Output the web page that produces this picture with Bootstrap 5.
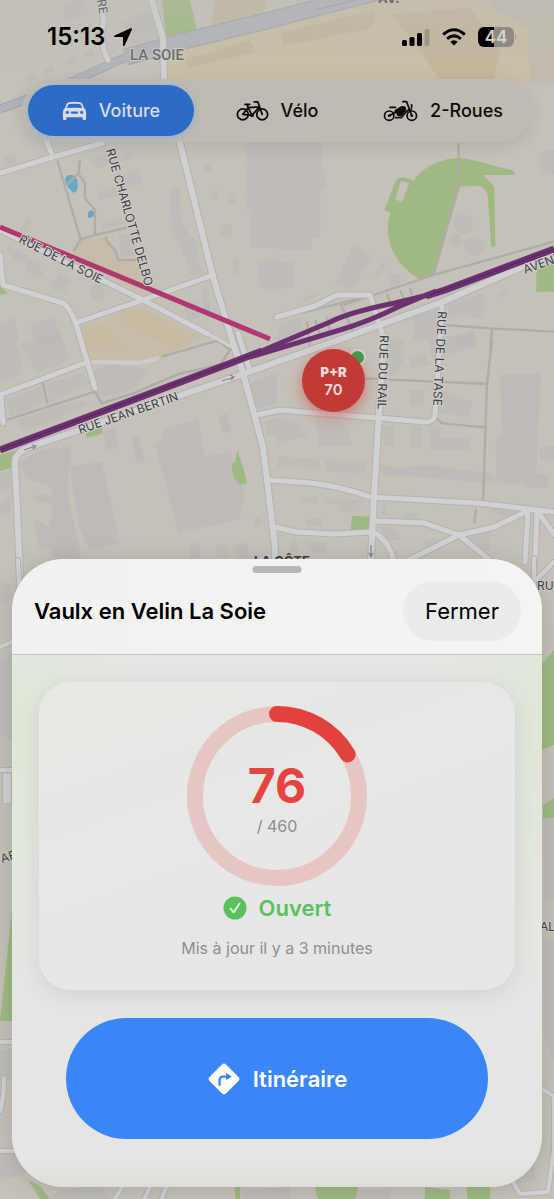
<!DOCTYPE html>
<html lang="fr">
<head>
<meta charset="utf-8">
<meta name="viewport" content="width=device-width, initial-scale=1">
<title>Vaulx en Velin La Soie</title>
<link href="https://cdn.jsdelivr.net/npm/bootstrap@5.3.0/dist/css/bootstrap.min.css" rel="stylesheet">
<style>
  body { font-family: Inter, "Liberation Sans", sans-serif; background: #c6c2ba; color: #000; }
  .map-layer { inset: 0; z-index: 0; }
  .map-layer > svg { width: 100%; height: 100%; display: block; }
  .over-map { z-index: 1; }

  /* map drawing */
  .bld { fill: #b9b7b8; }
  .lot { fill: #c6baa0; }
  .grass { fill: #a0b983; }
  .water { fill: #66a9c4; }
  .casing { fill: none; stroke: #b4b3b1; stroke-linejoin: round; stroke-linecap: round; }
  .street { fill: none; stroke: #d1d1d3; stroke-linejoin: round; stroke-linecap: round; }
  .footway { fill: none; stroke: #b0aca5; stroke-width: 7; stroke-linejoin: round; }
  .map-label { font: 400 12px Inter, "Liberation Sans", sans-serif; fill: #3e3e42; stroke: #d0cfcd; stroke-width: 2px; paint-order: stroke; }
  .map-place { font: 500 15px Roboto, "Liberation Sans", sans-serif; fill: #626266; stroke: #cdcac4; stroke-width: 2px; paint-order: stroke; }
  .map-district { font: 700 13px Inter, "Liberation Sans", sans-serif; fill: #3e3e42; }

  .status-row { height: 74px; padding: 0 37px 0 47px; }
  .clock { font-size: 24px; font-weight: 600; line-height: 28px; }
  .battery-level { width: 36px; height: 20px; border-radius: 6px; font-size: 17px; font-weight: 600; line-height: 20px; color: #d9d5cc;
    background: linear-gradient(90deg, #000 44%, #8f8b83 44%); }

  .mode-bar { margin: 5px 22px 0; padding: 6px; border-radius: 32px; background: rgba(191, 187, 177, .95); box-shadow: 0 4px 16px rgba(60, 60, 60, .12); }
  .mode-bar .btn { height: 51px; border: 0; border-radius: 26px; font-size: 18px; font-weight: 500; line-height: 24px; color: #0b0b0b; padding: 0; }
  .mode-bar .btn-check:checked + .btn { background: #2d6bc9; color: #d9dde2; box-shadow: 0 2px 8px rgba(120, 165, 215, .6); }

  .park-pin { left: 302px; top: 349px; width: 63px; height: 63px; border: 0; border-radius: 50%; background: #c23a37; color: #e9dfdb; z-index: 1;
    box-shadow: 0 5px 14px rgba(208, 60, 60, .55); font-weight: 600; font-size: 15px; line-height: 17px; padding: 0; }
  .park-pin strong { font-size: 13px; font-weight: 900; line-height: 17px; }
  .open-dot { left: 349px; top: 349px; width: 17px; height: 17px; border-radius: 50%; background: #3f9f49; border: 2px solid #cfd3ca; }

  .sheet { margin: 0 12px 12px; border-radius: 52px; background: #e5e6e3; box-shadow: 0 2px 24px rgba(0, 0, 0, .14); overflow: hidden; }
  .sheet-head { height: 96px; padding: 8px 21px 0 22px; background: linear-gradient(90deg, #f1f2ef, #f4f4f4); border-bottom: 1px solid #c2c5c1; }
  .grabber { top: 7px; width: 49px; height: 7px; border-radius: 4px; background: #b7b7b7; }
  .sheet-title { font-size: 22px; font-weight: 600; line-height: 28px; }
  .close-btn { width: 118px; height: 60px; border: 0; border-radius: 30px; background: #ebebeb; font-size: 22px; line-height: 28px; color: #000; }
  .sheet-body { padding: 27px 27px 48px; background:
    linear-gradient(0deg, rgba(215, 216, 211, .6), transparent 28px),
    radial-gradient(ellipse 120px 240px at 0 14%, #dfe7d7, transparent),
    radial-gradient(ellipse 110px 240px at 100% 14%, #dfe7d7, transparent), #e5e6e3; }
  .park-info { padding: 24px; border: 0; border-radius: 32px; background: linear-gradient(160deg, #e6e9e4, #e7e7e7 50%, #e7e6e6); box-shadow: 0 4px 20px rgba(80, 80, 80, .13); }
  .gauge { width: 180px; height: 180px; }
  .gauge > svg { width: 100%; height: 100%; }
  .free-count { font-size: 48px; font-weight: 700; line-height: 56px; margin-top: 4px; color: #e64440; }
  .muted-note { font-size: 16px; line-height: 24px; color: #8e8e90; }
  .state { margin-top: 6px; font-size: 22px; font-weight: 600; line-height: 32px; color: #5ac15c; }
  .updated { margin-top: 12px; margin-bottom: 6px; }
  .route-btn { margin: 28px 27px 0; height: 121px; border: 0; border-radius: 61px; background: #3b86f7; color: #fff; font-size: 22px; font-weight: 600; line-height: 28px; }
  .route-btn:hover { background: #2f79e8; color: #fff; }
</style>
</head>
<body>
<main class="position-relative min-vh-100 overflow-hidden d-flex flex-column">

  <div class="map-layer position-absolute">
    <svg viewBox="0 0 554 1199" preserveAspectRatio="xMidYMin slice" role="img" aria-label="Plan du quartier La Soie">
      <defs>
        <linearGradient id="topShade" x1="0" y1="0" x2="0" y2="1">
          <stop offset="0" stop-color="#bdbcbb"/><stop offset="1" stop-color="#bdbcbb" stop-opacity="0"/>
        </linearGradient>
      </defs>
      <rect width="554" height="1199" fill="#c5c1b8"/>

      <!-- north: railway and sheds -->
      <path fill="#cabe9f" d="M165 40L554 -70V80L505 82L430 80H162Z" opacity=".75"/>
      <path fill="#c0b497" opacity=".7" d="M215 0H267L262 17L211 25ZM390 14L470 8L500 50L494 80H440L420 50ZM185 60L250 40L256 52L188 68ZM280 33L375 10L372 28L284 46Z"/>
      <path class="grass" d="M162 0H190L197 30L166 37Z"/>
      <path class="bld" opacity=".5" d="M62 5L82 -2L88 13L66 22ZM25 78L35 72L37 78L28 83ZM42 70L53 65L55 71L45 75ZM65 60L76 56L78 62L68 66ZM83 53L93 49L95 55L86 58ZM122 22L150 10L158 38L132 44ZM490 0H554V84H530L528 28L490 7Z"/>
      <path fill="none" stroke="#a2a5aa" stroke-width="9" d="M0 109L60 87L126 57"/>
      <path fill="none" stroke="#b0b3b8" stroke-width="7" d="M0 109L60 87L126 57"/>
      <path fill="none" stroke="#a0a3a9" stroke-width="17" d="M126 57L180 42L270 20L378 -8"/>
      <path fill="none" stroke="#b0b3b8" stroke-width="15" d="M125 57L180 42L270 20L378 -8"/>
      <path fill="none" stroke="#979ba2" d="M315 10L370 -4"/>

      <!-- buildings, north-west -->
      <g transform="translate(0 140) scale(.3333)">
        <path class="bld" opacity=".55" d="M270 60L330 40L340 60L390 30L400 55L290 85ZM360 110L410 90L430 130L370 150ZM295 155L345 140L355 165L300 180ZM300 250L360 230L370 250L310 270ZM355 285L395 280L400 345L365 350ZM510 145L540 140V200L550 260L585 300L605 400L575 405L540 320L515 270ZM735 0H831V320L750 325V215L735 210ZM775 365L831 355V450L780 445ZM610 75L630 70L635 95L612 98ZM635 155L655 150V180L635 182ZM685 165L705 160V190L687 190ZM660 255L695 250V288L662 290ZM60 270L85 230L95 240L75 280ZM10 50L45 45L48 75L15 78ZM90 560L160 530L200 630H110ZM0 550L40 530L60 600L20 630H0ZM270 440L305 430L315 475L280 485ZM180 400L215 420L195 455L150 440ZM70 350L110 370L130 400L110 420L80 390ZM15 320L55 330L80 350L50 365ZM605 450L625 445L632 510L612 520ZM550 500L590 480L600 530L560 545ZM700 355L715 352V400L700 405Z"/>
        <path class="lot" d="M225 335L245 300L320 290L350 365L415 365L420 410L440 465L225 355ZM240 560L300 545L370 510L430 500L610 590L480 660H250Z" opacity=".65"/>
        <path class="lot" d="M245 590L300 555L380 630H250ZM365 540Q400 500 440 510L560 590Q560 630 500 615L400 570Z"/>
        <path class="water" d="M200 108Q220 98 232 120Q238 155 220 158Q196 140 195 118ZM265 215Q285 205 282 225Q272 240 263 230Z"/>
        <path class="footway" d="M172 62L242 298L285 285L395 260M242 298L220 335M240 60L235 100L200 135M235 100L255 130V175L285 210V285M317 290L325 310L345 330L355 360L410 360"/>
        <path class="grass" d="M0 440L25 460L0 465Z"/>
      </g>
      <!-- north-east: park and halls -->
      <g transform="translate(277 140) scale(.3333)">
        <path class="bld" opacity=".6" d="M0 0H138V90H145V150H130V290L105 295V330H0ZM0 365H50V445H0ZM230 315L285 350L225 450L172 430ZM320 362L330 370L305 415L292 405ZM335 405L370 400L375 430L340 435ZM790 35L831 30V105H790ZM515 490L620 460V535H590L560 520L510 540ZM410 530L490 510V600H410ZM0 560L70 530L80 590L0 620ZM75 475L120 458L122 468L80 485ZM515 600L590 570L600 620H520ZM665 460L680 450L690 465L675 475Z"/>
        <circle class="bld" opacity=".6" cx="560" cy="252" r="30"/><circle class="bld" opacity=".6" cx="592" cy="318" r="30"/><circle class="bld" opacity=".6" cx="535" cy="303" r="20"/>
        <path class="grass" fill-rule="evenodd" d="M322 210L358 118Q372 105 410 122Q450 65 530 55L575 57L710 92L714 105L618 105L652 140L655 320H643L632 165Q625 140 600 137L550 140L466 410L430 420Q335 360 333 270Q332 240 340 218ZM372 122L397 130L375 187L355 177Z"/>
        <path class="grass" d="M778 390L831 370V455H778Z"/>
        <path class="footway" d="M545 10V140L470 405L200 495M470 405L831 305"/>
        <path class="footway" d="M70 520L290 465M90 545L100 630M115 540L130 590M150 530L160 580M190 490L230 580M330 460L340 490M370 452L380 475M400 445L405 465M500 555L640 565L831 575M645 565L640 630"/>
      </g>
      <!-- south-west blocks -->
      <g transform="translate(0 340) scale(.3333)">
        <path class="bld" opacity=".75" d="M485 270L595 238L612 350L690 335L735 470L720 535L535 580L465 310L490 300ZM210 380L305 365L360 610L270 630L240 570ZM60 365L120 330L215 320L200 450L245 660H160L155 625L115 620L105 540L150 560L160 490L110 485L105 465H155V440L80 415ZM655 230L680 220L695 275L668 280ZM750 130L831 100V190L770 205ZM395 290L415 285L435 365L410 372ZM310 275L345 265L355 325L320 330Z"/>
        <path class="bld" opacity=".5" d="M60 10L180 -20L210 60L110 100ZM20 180L120 140L130 190L30 230ZM140 135L240 100L275 130L150 185ZM270 100L330 70L450 90L400 150L300 170ZM50 240L240 180L280 190L70 275ZM0 20L50 0L70 100L0 130ZM0 490L30 470V520L0 530ZM795 245L831 230V290L800 285ZM700 620L740 600L750 650L710 660ZM650 620Q680 600 690 650H650ZM760 535L780 530L785 555L762 560ZM570 620L600 610V655H572ZM0 400L30 390L35 440L0 450Z"/>
        <path class="grass" d="M258 280L305 262L308 280L260 294ZM695 370L705 365L712 330L735 400L740 430L720 435L700 410ZM0 345L48 330L35 385L0 392Z"/>
        <path class="footway" d="M485 50L660 0M305 190L400 160L540 100L660 75L690 30L640 -10M305 190L285 155L20 240M128 128L142 190"/>
      </g>
      <!-- south-east blocks -->
      <g transform="translate(277 340) scale(.3333)">
        <path class="bld" opacity=".75" d="M670 105L792 100L778 400L815 405V445L740 440L735 430L660 430L655 300L675 290ZM310 370L350 385L450 375L640 400L660 430L420 410L315 405Z"/>
        <path class="bld" opacity=".5" d="M115 240L205 250L225 315L125 320ZM0 235L70 245L90 290L40 300L0 320ZM0 350L125 355L130 385L0 380ZM145 360L265 365V400L150 395ZM320 260L350 255V315L320 318ZM395 260L435 258V325H400ZM455 255L490 265V295H580V330H460ZM395 60L440 40L460 75L400 85ZM450 0L580 -20L600 20L470 60ZM320 0H380V60L350 110H320ZM460 140L585 185L580 230L490 220ZM395 150H440V200H400ZM785 320H831V360H790ZM70 470L120 470L122 490H72ZM145 480H185V492H147ZM185 480H265L240 515H188ZM85 540L135 530V555L88 560ZM40 600L60 595V640L40 645ZM80 600L150 610V640L100 635ZM310 560L350 565L370 600L330 600ZM440 600L480 590L500 620L450 640ZM550 600L640 570L640 630L600 640ZM640 500L720 510L700 530L645 520ZM315 490H330V525H315ZM380 520L420 518V540L385 535Z"/>
        <path class="grass" d="M225 527L282 530L280 574L220 572Z"/>
        <path class="footway" d="M260 115L630 132M475 230L495 250L630 263M645 0L630 132L618 490M597 505L592 550"/>
      </g>

      <!-- streets -->
      <g>
        <path class="casing" stroke-width="8" d="M150 -5L163 38L164 80L180 143L213 277L233 343L243 373L263 447L275 547V562M384 337L379 413L374 497L372 537L371 562M243 374L322 346L440 303L554 253M20 575L15 463Q15 452 30 447L243 374"/>
        <path class="casing" stroke-width="7" d="M0 173L53 157L103 143M45 138L53 157M98 -5L104 20Q98 40 108 60M0 230L143 300L208 334M75 323L143 300L213 275M0 255L3 285L63 303Q72 310 77 327L95 388M0 395L85 363M1 397L3 423M277 317L315 306L337 295H370L384 340M238 333L250 370M442 305L435 415Q434 422 425 422L379 418L280 410L257 415M270 480L310 483Q340 486 370 497L477 503L554 512M274 527L297 532L334 534L372 532M375 521L424 523L459 535L494 527L530 510M405 562L459 535L492 562M375 533Q390 542 394 562M528 512L525 562M537 512L535 562M540 515L554 534"/>
      </g>
      <g>
        <path class="street" stroke-width="4" d="M93 362L140 363L158 358" opacity=".7"/>
        <path class="street" stroke-width="3" d="M208 334L230 346"/>
        <path class="street" stroke-width="6" d="M150 -5L163 38L164 80L180 143L213 277L233 343L243 373L263 447L275 547V562M384 337L379 413L374 497L372 537L371 562M243 374L322 346L440 303L554 253M20 575L15 463Q15 452 30 447L243 374"/>
        <path class="street" stroke-width="5" d="M0 173L53 157L103 143M45 138L53 157M98 -5L104 20Q98 40 108 60M0 230L143 300L208 334M75 323L143 300L213 275M0 255L3 285L63 303Q72 310 77 327L95 388M0 395L85 363M1 397L3 423M277 317L315 306L337 295H370L384 340M238 333L250 370M442 305L435 415Q434 422 425 422L379 418L280 410L257 415M270 480L310 483Q340 486 370 497L477 503L554 512M274 527L297 532L334 534L372 532M375 521L424 523L459 535L494 527L530 510M405 562L459 535L492 562M375 533Q390 542 394 562M528 512L525 562M537 512L535 562M540 515L554 534"/>
      </g>
      <path fill="none" stroke="#85868a" stroke-width="1.2" d="M24 450L36 446M32 445L36 446L33 449M222 381L234 377M230 375L234 377L231 380M371 545V557M369 553L371 557L373 553"/>

      <!-- side strips around the sheet -->
      <path class="bld" opacity=".6" d="M0 660L12 655V740L0 735ZM0 580L10 585V600L0 605ZM0 1050H12V1080H0ZM544 820L554 810V900H544ZM543 940H554V1060L544 1040ZM0 1150L30 1155L25 1175L0 1180ZM60 1190L100 1185L110 1199H50ZM240 1190L290 1187V1199H245ZM500 1160L535 1150V1180L510 1185ZM350 1190H390V1199H350Z"/>
      <path class="grass" d="M541 665L554 650V745L541 750ZM543 805L554 798V818H543ZM0 1020L12 910V1021H0ZM28 1180L40 1186L50 1199H40ZM235 1187H240V1199H235ZM315 1187H358L355 1199H318ZM425 1187L450 1190V1199H425ZM467 1187H490V1199H467Z"/>
      <path class="casing" stroke-width="6" d="M0 647L16 640M18 560L20 600M0 770H12M5 775V802M9 775V802M0 1042H14M4 1078Q4 1098 0 1112M0 1151H20M122 1187L112 1204M150 1187L142 1204M166 1187L160 1204M534 558V640M554 562L536 580M540 1088L554 1096V1150L548 1192L520 1194L512 1180"/>
      <path class="street" stroke-width="4" d="M0 647L16 640M18 560L20 600M0 770H12M5 775V802M9 775V802M0 1042H14M4 1078Q4 1098 0 1112M0 1151H20M122 1187L112 1204M150 1187L142 1204M166 1187L160 1204M534 558V640M554 562L536 580M540 1088L554 1096V1150L548 1192L520 1194L512 1180"/>

      <!-- metro and tram lines -->
      <path fill="none" stroke="#6b326f" stroke-width="7" stroke-linejoin="round" d="M0 450L231 363L262 351"/>
      <path fill="none" stroke="#6b326f" stroke-width="5" stroke-linejoin="round" d="M250 356L330 322Q350 312 395 303L436 293M250 357L340 330Q370 321 398 307L436 291"/>
      <path fill="none" stroke="#6b326f" stroke-width="7" stroke-linejoin="round" d="M426 296L445 290L554 249"/>
      <path fill="none" stroke="#5a2360" d="M0 450L262 351M430 295L554 249"/>
      <path fill="none" stroke="#b03770" stroke-width="5" d="M0 227L270 339"/>

      <text class="map-label" transform="translate(106 150) rotate(74)">RUE CHARLOTTE DELBO</text>
      <text class="map-label" transform="translate(18 242) rotate(27)">RUE DE LA SOIE</text>
      <text class="map-label" transform="translate(80 434) rotate(-19)">RUE JEAN BERTIN</text>
      <text class="map-label" transform="translate(380 335) rotate(92)">RUE DU RAIL</text>
      <text class="map-label" transform="translate(438 311) rotate(93)">RUE DE LA TASE</text>
      <text class="map-label" transform="translate(525 274) rotate(-20)">AVENUE</text>
      <text class="map-label" transform="translate(97 0) rotate(80)">RE</text>
      <text class="map-label" x="537" y="590">RU</text>
      <text class="map-label" transform="translate(2 863) rotate(-17)">AF</text>
      <text class="map-label" x="540" y="931">AL</text>
      <text class="map-place" x="130" y="60">LA SOIE</text>
      <text class="map-district" x="254" y="566">LA CÔTE</text>
      <text class="map-district" x="378" y="3">AV.</text>
      <rect width="554" height="80" fill="url(#topShade)" opacity=".35"/>
    </svg>
    <span class="open-dot position-absolute"></span>
    <button type="button" class="park-pin position-absolute d-flex flex-column align-items-center justify-content-center"><strong>P+R</strong><span>70</span></button>
  </div>

  <header class="over-map">
    <div class="status-row d-flex align-items-center justify-content-between">
      <div class="d-flex align-items-center gap-2">
        <time class="clock">15:13</time>
        <svg width="20" height="20" viewBox="0 0 20 20" aria-hidden="true"><path d="M18.500 1.200Q19.300 1.400 18.900 2.400L11.600 18.400Q10.700 19.800 10 18.200V10.400Q10 10 9.600 10H1.800Q.2 9.400 1.600 8.500L17.500 1.200Z"/></svg>
      </div>
      <div class="d-flex align-items-center gap-2">
        <svg width="28" height="18" viewBox="0 0 28 18" aria-label="Réseau"><rect y="12" width="5" height="6" rx="1.500"/><rect x="7.500" y="9" width="5" height="9" rx="1.500"/><rect x="15" y="5" width="5" height="13" rx="1.500"/><rect x="22.500" y="1" width="5" height="17" rx="1.500" fill="#9c978b"/></svg>
        <svg class="mx-1" width="24" height="18" viewBox="0 0 24 18" aria-label="Wi-Fi"><g fill="none" stroke="#000" stroke-width="3"><path d="M1.200 6.600Q12-3 22.800 6.600"/><path d="M5.200 10.800Q12 5 18.800 10.800"/></g><path d="M8.300 13.800Q12 10.800 15.700 13.800L12 17.600Z"/></svg>
        <div class="d-flex align-items-center">
          <span class="battery-level text-center">44</span>
          <svg width="3" height="6" viewBox="0 0 3 6" aria-hidden="true"><path d="M1 0Q3 3 1 6Z" fill="#8f8b83"/></svg>
        </div>
      </div>
    </div>

    <div class="mode-bar row g-0" role="group" aria-label="Mode de transport">
      <div class="col">
        <input class="btn-check" type="radio" name="mode" id="modeCar" checked>
        <label class="btn w-100 d-flex align-items-center justify-content-center gap-2" for="modeCar">
          <svg class="me-1" width="25" height="20" viewBox="0 0 26 20" aria-hidden="true"><path fill="currentColor" fill-rule="evenodd" d="M7.500.8Q13 .1 18.500.8Q20.600 1 21.400 3L23 7.200Q25 8.600 25 11V18Q25 19.300 23.700 19.300H22.600Q21.400 19.300 21.400 18V16.500H4.600V18Q4.600 19.300 3.400 19.300H2.300Q1 19.300 1 18V11Q1 8.600 3 7.200L4.600 3Q5.400 1 7.500.8ZM7.800 2.700Q6.700 2.800 6.300 3.700L5.100 6.900Q13 6.200 20.900 6.900L19.700 3.700Q19.300 2.800 18.200 2.700Q13 2.100 7.800 2.700ZM5.500 9.800a1.700 1.700 0 1 0 .01 0ZM20.500 9.800a1.700 1.700 0 1 0 .01 0ZM10.300 10.400a1.200 1.200 0 0 0 0 2.400H15.700a1.200 1.200 0 0 0 0-2.400Z"/></svg>
          Voiture
        </label>
      </div>
      <div class="col">
        <input class="btn-check" type="radio" name="mode" id="modeBike">
        <label class="btn w-100 d-flex align-items-center justify-content-center gap-2" for="modeBike">
          <svg class="me-1" width="33" height="22" viewBox="0 0 34 22" aria-hidden="true"><g fill="none" stroke="currentColor" stroke-width="1.800" stroke-linecap="round" stroke-linejoin="round"><circle cx="7" cy="14.500" r="5.600"/><circle cx="27" cy="14.500" r="5.600"/><path d="M7 14.500L12.500 7.500L16.500 15.500L24 6.800L12.500 7.500L11.500 4.200M7 14.500L16.500 15.500M27 14.500L22.500 1.600H18.800M9.300 4.200H14"/></g><circle cx="16.500" cy="15.500" r="2" fill="currentColor"/></svg>
          Vélo
        </label>
      </div>
      <div class="col">
        <input class="btn-check" type="radio" name="mode" id="modeMoto">
        <label class="btn w-100 d-flex align-items-center justify-content-center gap-2" for="modeMoto">
          <svg class="me-1" width="35" height="22" viewBox="0 0 35 22" aria-hidden="true"><g fill="none" stroke="currentColor" stroke-width="1.700" stroke-linecap="round" stroke-linejoin="round"><circle cx="6.200" cy="15.700" r="4.700"/><circle cx="28.800" cy="15.700" r="4.700"/><path d="M28.800 15.700L23.600 1.600H19.800M6.200 15.700L12.500 12.500M7 7.400H12.500M28.600 7.500V4.800M12.500 17.600H18.500L22.500 12.500Q24.800 9.200 28.300 9.300"/></g><path fill="currentColor" d="M11 12.800Q11.500 9.300 14.500 8.600L18 6.300Q20 5.400 22.300 6.500Q24 8.400 22.500 11L19 15.500Q16.500 17.200 14 15.500L13.500 13.500ZM6.200 14.300a1.400 1.400 0 1 0 .01 0ZM28.800 14.300a1.400 1.400 0 1 0 .01 0Z"/></svg>
          2-Roues
        </label>
      </div>
    </div>
  </header>

  <section class="sheet over-map position-relative mt-auto" aria-labelledby="parkName">
    <div class="sheet-head position-relative d-flex align-items-center justify-content-between">
      <span class="grabber position-absolute start-50 translate-middle-x"></span>
      <h1 class="sheet-title mb-0" id="parkName">Vaulx en Velin La Soie</h1>
      <button type="button" class="close-btn p-0">Fermer</button>
    </div>
    <div class="sheet-body d-flex flex-column">
      <div class="card park-info align-items-center text-center">
        <div class="gauge position-relative d-flex flex-column align-items-center justify-content-center">
          <svg class="position-absolute top-0 start-0" viewBox="0 0 180 180" aria-hidden="true">
            <circle cx="90" cy="90" r="82" fill="none" stroke="#e6c6c5" stroke-width="16"/>
            <circle cx="90" cy="90" r="82" fill="none" stroke="#e2423d" stroke-width="16" stroke-linecap="round" pathLength="460" stroke-dasharray="76 460" transform="rotate(-90 90 90)"/>
          </svg>
          <span class="free-count position-relative">76</span>
          <span class="muted-note position-relative">/ 460</span>
        </div>
        <div class="state d-flex align-items-center gap-2">
          <svg class="me-1" width="24" height="24" viewBox="0 0 24 24" aria-hidden="true"><circle cx="12" cy="12" r="11.500" fill="#5ac15c"/><path d="M7.500 12.600L10.700 16.300L16.500 7.600" fill="none" stroke="#ebf2ea" stroke-width="1.800" stroke-linecap="round" stroke-linejoin="round"/></svg>
          Ouvert
        </div>
        <p class="muted-note updated">Mis à jour il y a 3 minutes</p>
      </div>
      <button type="button" class="btn route-btn d-flex align-items-center justify-content-center gap-2">
        <svg class="me-1" width="34" height="34" viewBox="0 0 32 32" aria-hidden="true"><rect x="5" y="5" width="22" height="22" rx="3" fill="#fff" transform="rotate(45 16 16)"/><path d="M11.800 21.500V17Q11.800 13.800 15 13.800H19" fill="none" stroke="#3b86f7" stroke-width="2.200" stroke-linecap="round"/><path d="M18 10.200L23.300 13.700L18 17.200Z" fill="#3b86f7"/></svg>
        Itinéraire
      </button>
    </div>
  </section>
</main>
<script src="https://cdn.jsdelivr.net/npm/bootstrap@5.3.0/dist/js/bootstrap.bundle.min.js"></script>
</body>
</html>
